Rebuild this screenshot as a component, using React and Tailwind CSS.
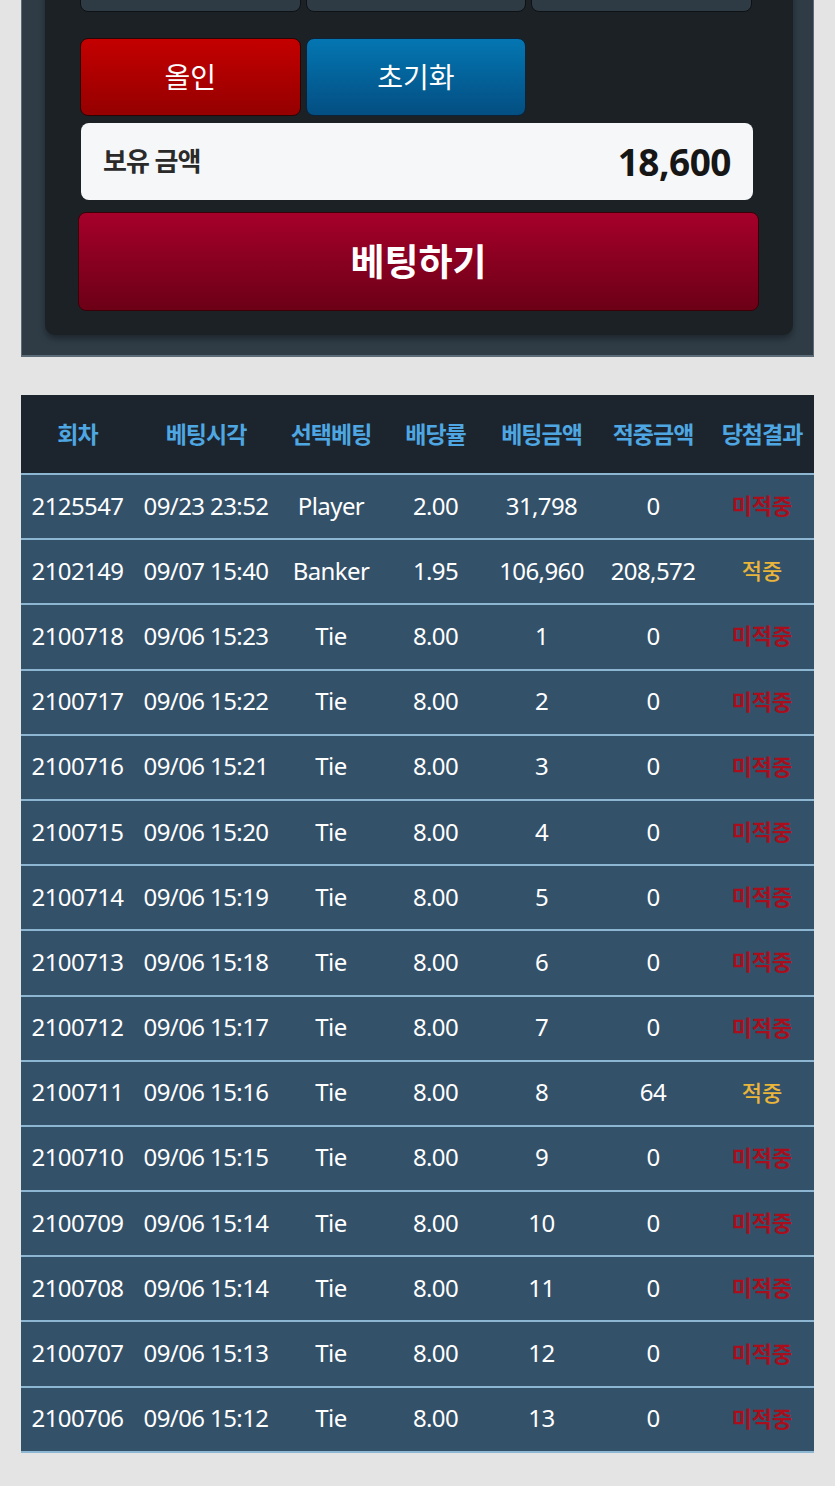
import React from "react";

const rows = [
  ["2125547", "09/23 23:52", "Player", "2.00", "31,798", "0", false],
  ["2102149", "09/07 15:40", "Banker", "1.95", "106,960", "208,572", true],
  ["2100718", "09/06 15:23", "Tie", "8.00", "1", "0", false],
  ["2100717", "09/06 15:22", "Tie", "8.00", "2", "0", false],
  ["2100716", "09/06 15:21", "Tie", "8.00", "3", "0", false],
  ["2100715", "09/06 15:20", "Tie", "8.00", "4", "0", false],
  ["2100714", "09/06 15:19", "Tie", "8.00", "5", "0", false],
  ["2100713", "09/06 15:18", "Tie", "8.00", "6", "0", false],
  ["2100712", "09/06 15:17", "Tie", "8.00", "7", "0", false],
  ["2100711", "09/06 15:16", "Tie", "8.00", "8", "64", true],
  ["2100710", "09/06 15:15", "Tie", "8.00", "9", "0", false],
  ["2100709", "09/06 15:14", "Tie", "8.00", "10", "0", false],
  ["2100708", "09/06 15:14", "Tie", "8.00", "11", "0", false],
  ["2100707", "09/06 15:13", "Tie", "8.00", "12", "0", false],
  ["2100706", "09/06 15:12", "Tie", "8.00", "13", "0", false],
];

const headers = ["회차", "베팅시각", "선택베팅", "배당률", "베팅금액", "적중금액", "당첨결과"];
const widths = ["w-[113px]", "w-[144px]", "w-[106px]", "w-[103px]", "w-[109px]", "w-[114px]", "w-[104px]"];

export default function App() {
  return (
    <div
      className="min-h-[1486px] bg-[#e4e4e4] overflow-hidden"
      style={{ fontFamily: '"Noto Sans", "Noto Sans CJK KR", sans-serif' }}
    >
      {/* Top panel */}
      <div className="mx-[21px] w-[793px] bg-[#2f3c46] border-x border-b-2 border-[#5b6b78] h-[357px] overflow-hidden">
        <div className="mx-[23px] w-[748px] mt-[-90px] bg-[#1c2125] rounded-b-[10px] shadow-[0_4px_6px_rgba(0,0,0,0.35)] px-[36px] pt-[24px] pb-[24px]">
          <div className="grid grid-cols-3 gap-x-[5px] gap-y-[26px] w-[672px] ml-[-1px]">
            <div className="h-[78px] rounded-[8px] bg-[#2e3a44] border border-[#0e1215]" />
            <div className="h-[78px] rounded-[8px] bg-[#2e3a44] border border-[#0e1215]" />
            <div className="h-[78px] rounded-[8px] bg-[#2e3a44] border border-[#0e1215]" />
            <div className="h-[78px] rounded-[8px] bg-gradient-to-b from-[#c40000] to-[#950000] border border-[#2a0505] flex items-center justify-center text-white text-[28px] leading-none">
              올인
            </div>
            <div className="h-[78px] rounded-[8px] bg-gradient-to-b from-[#0476b2] to-[#034f82] border border-[#0b2238] flex items-center justify-center text-white text-[28px] leading-none">
              초기화
            </div>
          </div>
          <div className="mt-[7px] w-[672px] h-[77px] rounded-[8px] bg-[#f6f7f8] flex items-center justify-between pl-[22px] pr-[22px]">
            <span className="text-[26px] font-bold text-[#2a2a2a] tracking-[-1px]">보유 금액</span>
            <span className="text-[37px] font-bold text-[#161616] tracking-[-0.5px]">18,600</span>
          </div>
          <div className="mt-[12px] ml-[-3px] w-[681px] h-[99px] rounded-[8px] bg-gradient-to-b from-[#a6002a] to-[#6c0016] border border-[#3a0008] flex items-center justify-center text-white text-[37px] font-bold leading-none">
            베팅하기
          </div>
        </div>
      </div>

      {/* Table */}
      <div className="mx-[21px] mt-[38px] w-[793px]">
        <table className="w-full border-collapse table-fixed">
          <thead>
            <tr className="bg-[#1c252d] h-[79px] border-b-2 border-[#8cb6d2]">
              {headers.map((h, i) => (
                <th key={h} className={`${widths[i]} text-center text-[23px] font-bold text-[#4ea7e2] tracking-[-1px] p-0`}>
                  {h}
                </th>
              ))}
            </tr>
          </thead>
          <tbody>
            {rows.map((r) => (
              <tr key={r[0]} className="bg-[#34516a] h-[65.2px] border-b-2 border-[#8cb6d2]">
                {r.slice(0, 6).map((c, i) => (
                  <td key={i} className="text-center text-white text-[24px] p-0 pb-[2px] whitespace-nowrap tracking-[-0.6px]">
                    {c}
                  </td>
                ))}
                <td className={`text-center text-[22px] p-0 pb-[2px] ${r[6] ? "text-[#e9b53a] font-medium" : "text-[#a80e1c] font-bold"}`}>
                  {r[6] ? "적중" : "미적중"}
                </td>
              </tr>
            ))}
          </tbody>
        </table>
      </div>
    </div>
  );
}
